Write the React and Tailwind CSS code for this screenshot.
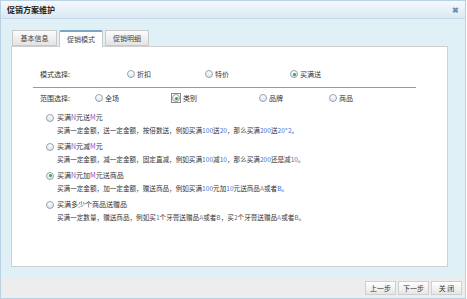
import React from 'react';

const font = { fontFamily: '"Noto Sans CJK SC", "Noto Sans", sans-serif' };

function Radio({ checked }) {
  return (
    <span className="inline-flex w-[8px] h-[8px] rounded-full border border-[#8fa3b5] bg-gradient-to-b from-[#ffffff] to-[#dfe6ec] items-center justify-center shrink-0">
      {checked && <span className="w-[3px] h-[3px] rounded-full bg-[#2fa83a]" />}
    </span>
  );
}

function Opt({ label, checked, boxed }) {
  return (
    <div className="flex items-center gap-[2px]">
      {boxed ? (
        <span className="inline-flex items-center justify-center w-[10px] h-[10px] border border-[#8a8a8a]">
          <Radio checked={checked} />
        </span>
      ) : (
        <Radio checked={checked} />
      )}
      <span>{label}</span>
    </div>
  );
}

const B = ({ children }) => <span className="text-[#4a6fd0]">{children}</span>;
const P = ({ children }) => <span className="text-[#8a4fc8]">{children}</span>;

function Block({ checked, title, desc }) {
  return (
    <div className="mb-[3px]">
      <div className="h-[13px] flex items-center pl-[13px] gap-[3px]">
        <Radio checked={checked} />
        <span>{title}</span>
      </div>
      <div className="h-[13px] flex items-center pl-[24px] whitespace-nowrap text-[6.6px]">{desc}</div>
    </div>
  );
}

export default function App() {
  return (
    <div className="w-[467px] h-[299px] bg-white" style={font}>
      <div className="w-[466px] h-[299px] border border-[#b8d2e3] flex flex-col text-[#333] text-[7px] leading-none">
        <div className="h-[18px] shrink-0 flex items-center justify-between px-[6px] bg-gradient-to-b from-[#f4f9fc] to-[#dce9f3] border-b border-[#c5d9e8]">
          <span className="text-[8px] font-bold text-[#222]">促销方案维护</span>
          <span className="text-[8px] text-[#6f8fb0] font-bold">✖</span>
        </div>
        <div className="flex-1 bg-[#dff1f7] pt-[10px] pl-[10px] pr-[17px]">
          <div className="flex items-end gap-[2px] pl-[1px] h-[17px]">
            <div className="w-[45px] h-[16px] flex items-center justify-center border border-[#c9c9c9] bg-gradient-to-b from-[#fbfbfb] to-[#e4e4e4] text-[#444]">基本信息</div>
            <div className="w-[44px] h-[17px] flex items-center justify-center border-x border-[#c9c9c9] border-t-2 border-t-[#7ea6c2] rounded-t-[2px] bg-white relative top-[1px] text-[#444]">促销模式</div>
            <div className="w-[44px] h-[16px] flex items-center justify-center border border-[#c9c9c9] bg-gradient-to-b from-[#fbfbfb] to-[#e4e4e4] text-[#444]">促销明细</div>
          </div>
          <div className="h-[221px] bg-white border border-[#cfcfcf] pt-[20px] pl-[21px]">
            <div className="w-[383px]">
              <div className="h-[14px] flex items-center pl-[7px]">
                <span className="w-[87px]">模式选择:</span>
                <div className="w-[78px]"><Opt label="折扣" /></div>
                <div className="w-[85px]"><Opt label="特价" /></div>
                <Opt label="买满送" checked />
              </div>
              <div className="mt-[6px] h-px bg-[#9a9a9a]" />
              <div className="mt-[3px] h-[14px] flex items-center pl-[7px]">
                <span className="w-[55px]">范围选择:</span>
                <div className="w-[76px]"><Opt label="全场" /></div>
                <div className="w-[88px]"><Opt label="类别" checked boxed /></div>
                <div className="w-[70px]"><Opt label="品牌" /></div>
                <Opt label="商品" />
              </div>
              <div className="mt-[6px]">
                <Block
                  title={<>买满<P>N</P>元送<P>M</P>元</>}
                  desc={<>买满一定金额，送一定金额，按倍数送，例如买满<B>100</B>送<B>20</B>，那么买满<B>200</B>送<B>20*2</B>。</>}
                />
                <Block
                  title={<>买满<P>N</P>元减<P>M</P>元</>}
                  desc={<>买满一定金额，减一定金额，固定直减，例如买满<B>100</B>减<B>10</B>，那么买满<B>200</B>还是减<B>10</B>。</>}
                />
                <Block
                  checked
                  title={<>买满<P>N</P>元加<P>M</P>元送商品</>}
                  desc={<>买满一定金额，加一定金额，赠送商品，例如买满<B>100</B>元加<B>10</B>元送商品<span className="text-[#888]">A</span>或者<B>B</B>。</>}
                />
                <Block
                  title={<>买满多少个商品送赠品</>}
                  desc={<>买满一定数量，赠送商品，例如买<B>1</B>个牙膏送赠品<span className="text-[#888]">A</span>或者<B>B</B>，买<B>2</B>个牙膏送赠品<span className="text-[#888]">A</span>或者<B>B</B>。</>}
                />
              </div>
            </div>
          </div>
        </div>
        <div className="h-[20px] shrink-0 bg-[#ededed] flex items-center justify-end gap-[2px] pr-[3px]">
          {['上一步', '下一步', '关 闭'].map((t) => (
            <div key={t} className="w-[31px] h-[14px] flex items-center justify-center border border-[#cfcfcf] bg-gradient-to-b from-[#ffffff] to-[#e6e6e6] text-[#333]">{t}</div>
          ))}
        </div>
      </div>
    </div>
  );
}
